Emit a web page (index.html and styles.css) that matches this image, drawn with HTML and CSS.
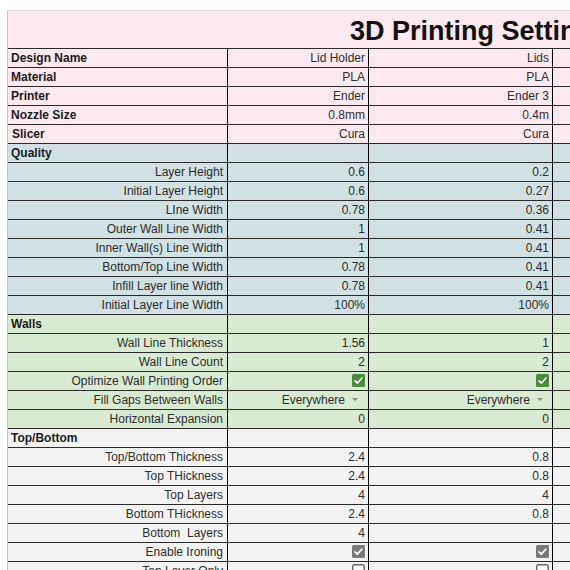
FILE: index.html
```html
<!DOCTYPE html>
<html lang="en">
<head>
<meta charset="utf-8">
<title>3D Printing Settings</title>
<link rel="stylesheet" href="styles.css">
</head>
<body>
<div class="sheet">
  <div class="title pink">3D Printing Settings</div>

  <div class="row pink"><div class="c head">Design Name</div><div class="c v">Lid Holder</div><div class="c v">Lids</div><div class="c"></div></div>
  <div class="row pink"><div class="c head">Material</div><div class="c v">PLA</div><div class="c v">PLA</div><div class="c"></div></div>
  <div class="row pink"><div class="c head">Printer</div><div class="c v">Ender</div><div class="c v">Ender 3</div><div class="c"></div></div>
  <div class="row pink"><div class="c head">Nozzle Size</div><div class="c v">0.8mm</div><div class="c v">0.4m</div><div class="c"></div></div>
  <div class="row pink"><div class="c head indent">Slicer</div><div class="c v">Cura</div><div class="c v">Cura</div><div class="c"></div></div>

  <div class="row blue"><div class="c head">Quality</div><div class="c"></div><div class="c"></div><div class="c"></div></div>
  <div class="row blue"><div class="c lbl">Layer Height</div><div class="c v">0.6</div><div class="c v">0.2</div><div class="c"></div></div>
  <div class="row blue"><div class="c lbl">Initial Layer Height</div><div class="c v">0.6</div><div class="c v">0.27</div><div class="c"></div></div>
  <div class="row blue"><div class="c lbl">LIne Width</div><div class="c v">0.78</div><div class="c v">0.36</div><div class="c"></div></div>
  <div class="row blue"><div class="c lbl">Outer Wall Line Width</div><div class="c v">1</div><div class="c v">0.41</div><div class="c"></div></div>
  <div class="row blue"><div class="c lbl">Inner Wall(s) Line Width</div><div class="c v">1</div><div class="c v">0.41</div><div class="c"></div></div>
  <div class="row blue"><div class="c lbl">Bottom/Top Line Width</div><div class="c v">0.78</div><div class="c v">0.41</div><div class="c"></div></div>
  <div class="row blue"><div class="c lbl">Infill Layer line Width</div><div class="c v">0.78</div><div class="c v">0.41</div><div class="c"></div></div>
  <div class="row blue"><div class="c lbl">Initial Layer Line Width</div><div class="c v">100%</div><div class="c v">100%</div><div class="c"></div></div>

  <div class="row green"><div class="c head">Walls</div><div class="c"></div><div class="c"></div><div class="c"></div></div>
  <div class="row green"><div class="c lbl">Wall Line Thickness</div><div class="c v">1.56</div><div class="c v">1</div><div class="c"></div></div>
  <div class="row green"><div class="c lbl">Wall Line Count</div><div class="c v">2</div><div class="c v">2</div><div class="c"></div></div>
  <div class="row green"><div class="c lbl">Optimize Wall Printing Order</div>
    <div class="c v"><svg class="cb" viewBox="0 0 13 13"><rect class="cb-green" x="0" y="0" width="13" height="13" rx="1.5"/><polyline class="tick" points="3,6.8 5.4,9.1 10,4"/></svg></div>
    <div class="c v"><svg class="cb" viewBox="0 0 13 13"><rect class="cb-green" x="0" y="0" width="13" height="13" rx="1.5"/><polyline class="tick" points="3,6.8 5.4,9.1 10,4"/></svg></div>
    <div class="c"></div></div>
  <div class="row green"><div class="c lbl">Fill Gaps Between Walls</div>
    <div class="c v dd">Everywhere<span class="arrow"></span></div>
    <div class="c v dd dd3">Everywhere<span class="arrow"></span></div>
    <div class="c"></div></div>
  <div class="row green"><div class="c lbl">Horizontal Expansion</div><div class="c v">0</div><div class="c v">0</div><div class="c"></div></div>

  <div class="row grey"><div class="c head">Top/Bottom</div><div class="c"></div><div class="c"></div><div class="c"></div></div>
  <div class="row grey"><div class="c lbl">Top/Bottom Thickness</div><div class="c v">2.4</div><div class="c v">0.8</div><div class="c"></div></div>
  <div class="row grey"><div class="c lbl">Top THickness</div><div class="c v">2.4</div><div class="c v">0.8</div><div class="c"></div></div>
  <div class="row grey"><div class="c lbl">Top Layers</div><div class="c v">4</div><div class="c v">4</div><div class="c"></div></div>
  <div class="row grey"><div class="c lbl">Bottom THickness</div><div class="c v">2.4</div><div class="c v">0.8</div><div class="c"></div></div>
  <div class="row grey"><div class="c lbl">Bottom&nbsp; Layers</div><div class="c v">4</div><div class="c v"></div><div class="c"></div></div>
  <div class="row grey"><div class="c lbl">Enable Ironing</div>
    <div class="c v"><svg class="cb" viewBox="0 0 13 13"><rect class="cb-grey" x="0" y="0" width="13" height="13" rx="1.5"/><polyline class="tick" points="3,6.8 5.4,9.1 10,4"/></svg></div>
    <div class="c v"><svg class="cb" viewBox="0 0 13 13"><rect class="cb-grey" x="0" y="0" width="13" height="13" rx="1.5"/><polyline class="tick" points="3,6.8 5.4,9.1 10,4"/></svg></div>
    <div class="c"></div></div>
  <div class="row grey"><div class="c lbl">Top Layer Only</div>
    <div class="c v"><svg class="cb" viewBox="0 0 13 13"><rect class="cb-empty" x="0.75" y="0.75" width="11.5" height="11.5" rx="1.5"/></svg></div>
    <div class="c v"><svg class="cb" viewBox="0 0 13 13"><rect class="cb-empty" x="0.75" y="0.75" width="11.5" height="11.5" rx="1.5"/></svg></div>
    <div class="c"></div></div>
</div>
</body>
</html>
```
FILE: styles.css
```css
html, body {
  margin: 0;
  padding: 0;
  background: #ffffff;
  overflow: hidden;
}

body {
  font-family: "Liberation Sans", Arial, sans-serif;
  font-size: 12px;
  color: #2e2e2e;
}

.sheet {
  margin: 10px 0 0 7px;
  width: 760px;
  border-top: 1px solid #dcdcdc;
  border-left: 1px solid #c4c4c4;
}

.pink { background: #fce8ef; }
.blue { background: #d0e0e3; }
.green { background: #d9ead3; }
.grey { background: #f3f3f3; }

.title {
  box-sizing: border-box;
  height: 38px;
  border-bottom: 1px solid #2a2a2a;
  padding: 5px 0 0 342px;
  font-size: 27px;
  line-height: 30px;
  font-weight: bold;
  color: #111111;
  white-space: nowrap;
  overflow: hidden;
}

.row {
  box-sizing: border-box;
  display: grid;
  grid-template-columns: 220px 141px 184px 200px;
  height: 19px;
  border-bottom: 1px solid #2a2a2a;
}

.c {
  box-sizing: border-box;
  border-right: 1px solid #000000;
  padding-top: 1px;
  line-height: 17px;
  white-space: nowrap;
  overflow: hidden;
}

.head {
  font-weight: bold;
  color: #1c1c1c;
  padding-left: 3px;
  text-align: left;
}

.indent { padding-left: 4px; }

.lbl {
  text-align: right;
  padding-right: 4px;
}

.v {
  text-align: right;
  padding-right: 3px;
}

.cb {
  width: 13px;
  height: 13px;
  vertical-align: -2px;
}

.cb-green { fill: #4a8a3c; }
.cb-grey { fill: #7b7b7b; }
.cb-empty { fill: #ffffff; stroke: #6b6b6b; stroke-width: 1.5; }

.tick {
  fill: none;
  stroke: #ffffff;
  stroke-width: 1.6;
  stroke-linecap: round;
  stroke-linejoin: round;
}

.dd { padding-right: 10px; }
.dd3 { padding-right: 9px; }

.arrow {
  display: inline-block;
  width: 0;
  height: 0;
  margin-left: 7px;
  vertical-align: 3px;
  border-left: 3.5px solid transparent;
  border-right: 3.5px solid transparent;
  border-top: 3.5px solid #7f8f7d;
}
```
